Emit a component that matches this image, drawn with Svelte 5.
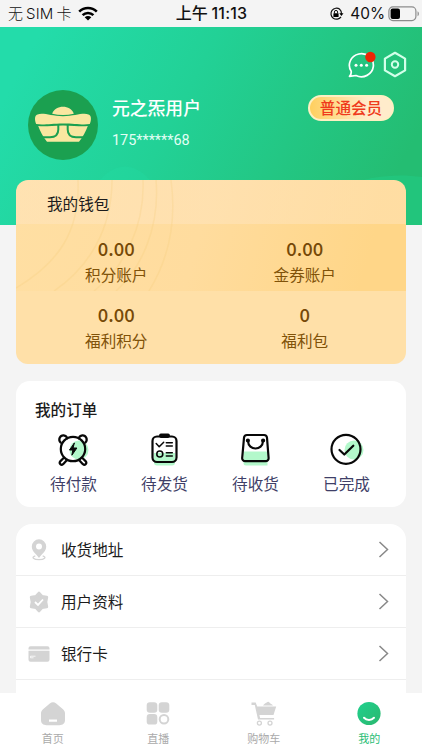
<script lang="ts">
  const wallet = [
    { value: "0.00", label: "积分账户" },
    { value: "0.00", label: "金券账户" },
    { value: "0.00", label: "福利积分" },
    { value: "0", label: "福利包" },
  ];

  const orders = [
    { icon: "pay", label: "待付款" },
    { icon: "ship", label: "待发货" },
    { icon: "receive", label: "待收货" },
    { icon: "done", label: "已完成" },
  ];

  const menu = [
    { icon: "address", label: "收货地址" },
    { icon: "profile", label: "用户资料" },
    { icon: "card", label: "银行卡" },
  ];

  const tabs = [
    { icon: "home", label: "首页" },
    { icon: "live", label: "直播" },
    { icon: "cart", label: "购物车" },
    { icon: "mine", label: "我的" },
  ];

  let active = $state("mine");
</script>

<div class="page">
  <div class="status">
    <div class="carrier">
      <span>无<span class="sim">SIM</span>卡</span>
      <svg width="20" height="15" viewBox="0 0 20 15">
        <g fill="none" stroke="#000" stroke-width="2.6">
          <path d="M1.2 5.6C6.2.8 13.8.8 18.8 5.6" />
          <path d="M4.6 9.1c3-2.9 7.8-2.9 10.8 0" />
        </g>
        <path d="M6.7 11.2c1.8-1.7 4.8-1.7 6.6 0L10 14.6z" />
      </svg>
    </div>
    <div class="time">上午 11:13</div>
    <div class="power">
      <svg width="15" height="14" viewBox="0 0 15 14">
        <path d="M10.8 2.3A5.5 5.5 0 1 0 12 9.8M9.6 1.6A5.5 5.5 0 0 1 12.3 7" fill="none" stroke="#111" stroke-width="1.2" />
        <path d="M10.3 6.2h4.2l-2.1 2.7z" />
        <rect x="4.4" y="6.2" width="5.2" height="3.8" rx=".6" />
        <path d="M5.4 6.5V5a1.6 1.6 0 0 1 3.2 0v1.5" fill="none" stroke="#111" />
      </svg>
      <span>40%</span>
      <svg class="battery" width="32" height="16" viewBox="0 0 32 16">
        <rect x=".9" y=".9" width="27" height="13.7" rx="4" fill="none" stroke="#8c8c8c" stroke-width="1.2" />
        <rect x="2.6" y="2.6" width="9.4" height="10.3" rx="2" />
        <path d="M29.5 5.3c2 .8 2 4.2 0 5z" fill="#999" />
      </svg>
    </div>
  </div>

  <header>
    <svg class="waves" viewBox="0 0 422 198" preserveAspectRatio="none">
      <path d="M75 198C105 120 145 120 175 198z" fill="#22dea8" opacity=".25" />
      <path d="M290 198C330 154 380 144 422 150v48z" fill="#20d28c" opacity=".4" />
    </svg>
    <div class="actions">
      <svg width="30" height="28" viewBox="0 0 30 28">
        <path d="M4.2 20.3A12 11.5 0 1 1 9 24.5L2.5 25.3c1.3-1.4 2-2.8 1.7-5z" fill="none" stroke="#fff" stroke-width="1.7" stroke-linejoin="round" />
        <g fill="#fff">
          <circle cx="9" cy="14.3" r="1.5" /><circle cx="14.3" cy="14.3" r="1.5" /><circle cx="19.6" cy="14.3" r="1.5" />
        </g>
        <circle cx="23.4" cy="6" r="5.2" fill="#ec2604" />
      </svg>
      <svg width="24" height="27" viewBox="0 0 24 27">
        <path d="M12 1.8 22.1 7.6V19.4L12 25.2 1.9 19.4V7.6z" fill="none" stroke="#d2ffe9" stroke-width="2.2" stroke-linejoin="round" />
        <circle cx="12" cy="13.5" r="3.2" fill="none" stroke="#d2ffe9" stroke-width="2" />
      </svg>
    </div>
    <div class="user">
      <svg class="avatar" width="70" height="70" viewBox="0 0 70 70">
        <circle cx="35" cy="35" r="35" fill="#1ba050" />
        <g fill="#f9e7a0">
          <path d="M24.2 23.8C27 14.5 43 14.5 45.8 23.8c-7 1.6-14.6 1.6-21.6 0z" />
          <path d="M9.5 24.4C16 22.5 23 26.2 35 26.2s19-3.7 25.5-1.8c3 1 3 5.4 1.3 9.6C54 35.2 47 33.4 35 33.4S16 35.2 8.2 34c-1.7-4.200-1.700-8.600 1.300-9.600z" />
          <path d="M10.200 36C17 37 24 35.400 35 35.400s18 1.600 24.800.6C58 41 54.500 47.500 51 51.800H19C15.500 47.500 12 41 10.200 36z" />
        </g>
        <g fill="none" stroke="#1ba050" stroke-width="2">
          <path d="M30.300 35v4.500c0 5.500-3 7.700-8.300 7.700h-7M39.700 35v4.500c0 5.500 3 7.700 8.300 7.700h7" />
        </g>
      </svg>
      <div class="info">
        <div class="name">元之炁用户</div>
        <div class="phone">175******68</div>
      </div>
      <div class="level">普通会员</div>
    </div>
  </header>

  <section class="wallet">
    <svg class="rings" width="390" height="111" viewBox="0 0 390 111">
      <g fill="none" stroke="#f5cb78" stroke-width="1.5" opacity=".25">
        <path d="M62 0C64 50 44 82 0 108M96 0C96 50 72 88 38 111M127 0C129 46 108 88 78 111M140 0C144 46 126 88 100 111M155 0C161 44 152 80 133 111" />
      </g>
    </svg>
    <h2>我的钱包</h2>
    <div class="accounts">
      {#each wallet as item}
        <div class="account">
          <div class="value">{item.value}</div>
          <div class="label">{item.label}</div>
        </div>
      {/each}
    </div>
  </section>

  <section class="orders">
    <h2>我的订单</h2>
    <div class="order-list">
      {#each orders as item}
        <div class="order">
          <svg width="34" height="34" viewBox="0 0 34 34" fill="none" stroke="#080808" stroke-width="2.2" stroke-linecap="round" stroke-linejoin="round">
            {#if item.icon === "pay"}
              <circle cx="22" cy="17" r="9.5" fill="#b3f8cb" stroke="none" />
              <path d="M3.600 9.600C.8 6.500 3 2 6.700 2.300c2 .2 3.200 1.400 3.500 3.100M21.800 5.400c.3-1.700 1.500-2.900 3.500-3.100 3.700-.3 5.900 4.200 3.100 7.300" />
              <circle cx="16" cy="16" r="12.200" />
              <path d="m6.600 25-3.400 3.400c-1.500 2 .9 4.400 2.900 2.800l3.900-4.300M25.400 25l3.400 3.400c1.500 2-.9 4.400-2.900 2.800L22 26.900" />
              <path d="M17.200 10.200 12.500 17h3.300l-.9 5.200 5-7.200h-3.500z" fill="#080808" stroke-width="1" />
            {:else if item.icon === "ship"}
              <path d="M6 20h21v9.500a3 3 0 0 1-3 3H9a3 3 0 0 1-3-3z" fill="#b3f8cb" stroke="none" />
              <rect x="4.500" y="3.500" width="24" height="25.500" rx="4.500" />
              <rect x="11.900" y="1.300" width="9.200" height="2.800" rx="1" fill="#080808" stroke-width="1.600" />
              <path d="m8.200 10.500 3 3.300 4.500-4.600M18.300 9.800h6M18.300 13h6M18.300 19.700h6M18.300 23h6" stroke-width="1.500" />
              <circle cx="11.800" cy="21" r="3" stroke-width="1.600" />
            {:else if item.icon === "receive"}
              <path d="M4.500 18.500h24v14H7a2.500 2.500 0 0 1-2.500-2.500z" fill="#b3f8cb" stroke="none" />
              <path d="M5 4.800A3 3 0 0 1 8 2h17a3 3 0 0 1 3 2.800L29.600 25a3 3 0 0 1-3 3.200H6.200a3 3 0 0 1-3-3.200z" />
              <path d="M9 8c.3 10 14.700 10 15 0" />
              <circle cx="8.900" cy="7.500" r="1" fill="#080808" /><circle cx="24.100" cy="7.500" r="1" fill="#080808" />
            {:else}
              <circle cx="24" cy="17" r="9.500" fill="#b3f8cb" stroke="none" />
              <circle cx="16" cy="16.300" r="14.500" />
              <path d="m9.500 17 4.800 4.500L23.300 12.700" />
            {/if}
          </svg>
          <span>{item.label}</span>
        </div>
      {/each}
    </div>
  </section>

  <section class="menu">
    {#each menu as item}
      <div class="row">
        <svg width="22" height="22" viewBox="0 0 22 22" fill="#d4d4d4">
          {#if item.icon === "address"}
            <path fill-rule="evenodd" d="M11 .3a7.200 7.200 0 0 0-7.200 7.200c0 4.800 4.200 7.300 7.200 11.500 3-4.200 7.200-6.700 7.200-11.500A7.200 7.200 0 0 0 11 .3zm0 4.200a3 3 0 1 1 0 6 3 3 0 0 1 0-6z" />
            <path d="M7.300 16.800c-4.500 1.400-1.700 3.900 3.700 3.900s8.200-2.500 3.700-3.900" fill="none" stroke="#d4d4d4" stroke-width="1.300" />
          {:else if item.icon === "profile"}
            <path d="m11 2.200 3 3.400 4.700.7-.9 4.700.9 4.700-4.700.7-3 3.400-3-3.400-4.700-.7.900-4.700-.9-4.700L8 5.600z" stroke="#d4d4d4" stroke-width="3" stroke-linejoin="round" />
            <path d="m7 11 3 2.900 5-5.400" fill="none" stroke="#fff" stroke-width="1.800" />
          {:else}
            <path d="M.5 5.200a2 2 0 0 1 2-2h17a2 2 0 0 1 2 2v1.200H.5zM.5 7.800h21v9a2 2 0 0 1-2 2h-17a2 2 0 0 1-2-2z" />
            <path d="M2.500 14.800v-1.600h5M2.500 14.800h3" fill="none" stroke="#fff" stroke-width=".8" />
          {/if}
        </svg>
        <span>{item.label}</span>
        <svg width="11" height="17" viewBox="0 0 11 17">
          <path d="m1.500 1 8 7.500-8 7.500" fill="none" stroke="#888" stroke-width="1.500" />
        </svg>
      </div>
    {/each}
  </section>

  <nav>
    {#each tabs as tab}
      <button class="tab" class:active={active === tab.icon} onclick={() => (active = tab.icon)}>
        <svg width="26" height="26" viewBox="0 0 26 26" fill="#d4d4d4">
          {#if tab.icon === "home"}
            <path fill-rule="evenodd" d="M9.800 2.400c2-1.700 4.400-1.700 6.400 0l6.800 5.800c1.300 1.200 2 2.600 2 4.300V19c0 3.400-2.200 5.200-5.500 5.200h-13C3.200 24.200 1 22.400 1 19v-6.500c0-1.700.7-3.100 2-4.300zM9 18.400v2.400h8v-2.400z" />
          {:else if tab.icon === "live"}
            <rect x="1.700" y="1.200" width="10.600" height="10.600" rx="3.200" />
            <rect x="13.700" y="1.200" width="10.600" height="10.600" rx="3.200" />
            <rect x="1.700" y="13" width="10.600" height="10.600" rx="3.200" />
            <circle cx="19" cy="18.300" r="4.300" fill="none" stroke="#d4d4d4" stroke-width="2" />
          {:else if tab.icon === "cart"}
            <path d="M.5 1.400h4.200l1.500 4h19L22.500 14H8.400l.7 3h14v1.600H7L3.800 4H.5z" />
            <path d="M12 4.600c1.600-2.300 2.500-2 3.700-3.100 1.200-1 2-1 3 .3.900 1.300 2 1 3.300 2.800z" />
            <g fill="none" stroke="#d4d4d4" stroke-width="1.300">
              <circle cx="8.400" cy="22.100" r="2" /><circle cx="19" cy="22.100" r="2" />
            </g>
          {:else}
            <defs>
              <linearGradient id="face" x1="0" y1="0" x2="1" y2="1">
                <stop offset="0" stop-color="#20d08e" /><stop offset="1" stop-color="#2bb86e" />
              </linearGradient>
            </defs>
            <circle cx="13" cy="12.500" r="11.600" fill="url(#face)" />
            <path d="M8 16.800c2.700 2.900 7.300 2.900 10 0" fill="none" stroke="#fff" stroke-width="2" stroke-linecap="round" />
          {/if}
        </svg>
        <span>{tab.label}</span>
      </button>
    {/each}
  </nav>
</div>

<style>
  :global(body) {
    background: #f4f4f4;
  }

  .page {
    height: 750px;
    display: flex;
    flex-direction: column;
    overflow: hidden;
    background: #f4f4f4;
    color: #1c1c1c;
    font-family: "Noto Sans CJK SC", sans-serif;
    font-size: 15.6px;
  }

  h2 {
    margin: 0;
    font-size: 15.6px;
    line-height: 24px;
    font-weight: 400;
  }

  .status {
    display: grid;
    grid-template-columns: 1fr auto 1fr;
    align-items: center;
    height: 27px;
    flex: none;
    padding: 0 8px;
    font-family: Inter, "Noto Sans CJK SC", sans-serif;
    font-size: 15px;
    line-height: 27px;
    color: #111;
  }

  .carrier,
  .power {
    display: flex;
    align-items: center;
    font-weight: 300;
  }

  .carrier {
    gap: 6px;
  }

  .sim {
    margin: 0 3px;
    letter-spacing: 0.2px;
  }

  .time {
    padding-left: 1px;
    font-size: 16px;
    font-weight: 500;
    word-spacing: -1px;
    letter-spacing: 0.2px;
  }

  .power {
    justify-content: flex-end;
    font-weight: 400;
  }

  .power span {
    margin: 0 3px 0 6px;
    font-size: 15.4px;
  }

  .battery {
    margin-right: -6px;
  }

  header {
    position: relative;
    flex: none;
    height: 198px;
    background: linear-gradient(118deg, #23dcaa 8%, #22d196 42%, #24bd72 90%);
  }

  .waves {
    position: absolute;
    inset: 0;
    width: 100%;
    height: 100%;
  }

  .actions {
    position: relative;
    display: flex;
    justify-content: flex-end;
    gap: 6px;
    padding: 24px 15px 0 0;
    height: 39px;
  }

  .user {
    position: relative;
    display: flex;
    align-items: flex-start;
    padding: 0 28px;
  }

  .info {
    margin-left: 14px;
    flex: 1;
    color: #fff;
  }

  .name {
    font-size: 17.8px;
    line-height: 28px;
    font-weight: 500;
    margin-top: 3px;
  }

  .phone {
    margin-top: 10px;
    font-size: 14.4px;
    line-height: 20px;
    font-weight: 400;
    font-family: Roboto, sans-serif;
    color: #e3fff5;
  }

  .level {
    margin-top: 5px;
    width: 86px;
    height: 26px;
    box-sizing: border-box;
    border: 2px solid #fdf0c2;
    border-radius: 13px;
    background: linear-gradient(90deg, #ffcf5e, #ffeccb 70%);
    color: #ef3a1c;
    font-weight: 500;
    line-height: 21px;
    text-align: center;
  }

  .wallet {
    position: relative;
    flex: none;
    height: 184px;
    margin: -45px 16px 0;
    border-radius: 12px;
    overflow: hidden;
    background:
      linear-gradient(#ffe0a8, #ffe0a8) 0 111px no-repeat,
      linear-gradient(rgba(255, 230, 195, 0.45), rgba(255, 230, 195, 0.45)) 0 0 / 100% 44px no-repeat,
      linear-gradient(105deg, #ffdfa3 0%, #ffdc9e 45%, #ffd688 85%);
  }

  .rings {
    position: absolute;
    top: 0;
    left: 0;
  }

  .wallet h2 {
    position: relative;
    padding: 11px 0 0 31px;
  }

  .accounts {
    position: relative;
    display: grid;
    grid-template-columns: 1fr 1fr;
    row-gap: 14px;
    padding: 20px 7px 0 6px;
    text-align: center;
    color: #805209;
  }

  .value {
    font-size: 18.4px;
    line-height: 26px;
    font-weight: 500;
    color: #764907;
  }

  .label {
    line-height: 26px;
  }

  .orders {
    flex: none;
    height: 126px;
    margin: 17px 16px 0;
    border-radius: 14px;
    background: #fff;
  }

  .orders h2 {
    padding: 16px 0 0 19px;
    font-weight: 500;
  }

  .order-list {
    display: grid;
    grid-template-columns: repeat(4, 1fr);
    padding: 12px 14px 0 12px;
  }

  .order {
    display: flex;
    flex-direction: column;
    align-items: center;
    gap: 4px;
    line-height: 24px;
    color: #3f3f68;
  }

  .menu {
    flex: 1;
    margin: 17px 16px 0;
    border-radius: 16px 16px 0 0;
    background: #fff;
  }

  .row {
    display: flex;
    align-items: center;
    height: 52px;
    box-sizing: border-box;
    padding: 0 17px 0 12px;
    border-bottom: 1px solid #eee;
  }

  .row span {
    flex: 1;
    margin-left: 11px;
    padding-bottom: 2px;
    line-height: 24px;
  }

  nav {
    display: flex;
    flex: none;
    height: 57px;
    background: #fff;
  }

  .tab {
    flex: 1;
    display: flex;
    flex-direction: column;
    align-items: center;
    gap: 3px;
    padding: 8px 0 0;
    border: 0;
    background: none;
    color: #aaa;
    font-family: inherit;
    font-size: 11px;
    line-height: 16px;
  }

  .tab.active {
    color: #28bd75;
  }
</style>
